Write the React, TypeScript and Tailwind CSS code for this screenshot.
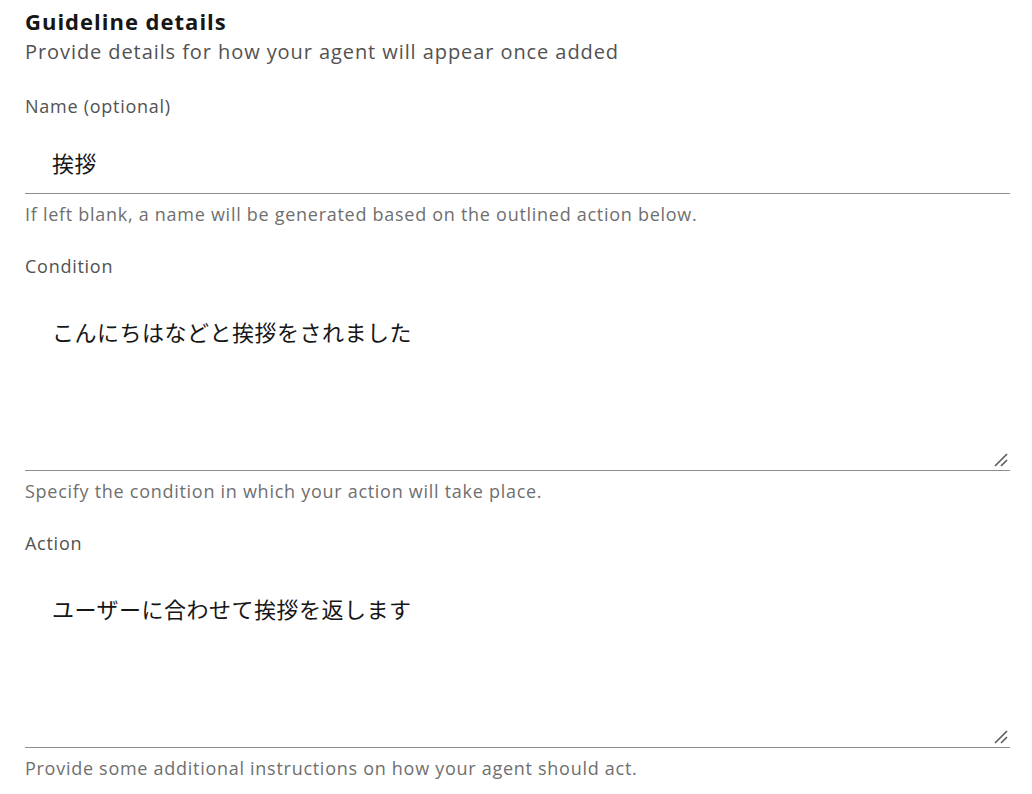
const font = {
  fontFamily: '"Open Sans", "Noto Sans CJK JP", sans-serif',
};

function ResizeHandle() {
  return (
    <svg
      className="pointer-events-none absolute bottom-[3px] right-[2px]"
      width="14"
      height="14"
      viewBox="0 0 14 14"
    >
      <path d="M1 13 L13 1 M7 13 L13 7" stroke="#5a5a5a" strokeWidth="1.6" />
    </svg>
  );
}

function Field({
  label,
  value,
  helper,
  multiline,
}: {
  label: string;
  value: string;
  helper: string;
  multiline?: boolean;
}) {
  return (
    <div className="flex flex-col">
      <label className="text-[18px] leading-[22px] tracking-[0.73px] text-[#525252]">{label}</label>
      <div
        className={
          "relative mt-[17px] border-b border-[#8d8d8d] pl-[27px] text-[22px] leading-[26px] tracking-[0.5px] text-[#161616] " +
          (multiline ? "h-[177px] pt-[25px]" : "h-[60px] pt-[16px]")
        }
      >
        {value}
        {multiline && <ResizeHandle />}
      </div>
      <p className="mt-[9px] text-[18px] leading-[22px] tracking-[0.72px] text-[#6f6f6f]">{helper}</p>
    </div>
  );
}

export default function App() {
  return (
    <div className="min-h-screen bg-white pl-[25px] pr-[22px] pt-[7px]" style={font}>
      <h1 className="text-[22px] font-bold leading-[28px] tracking-[1px] text-[#161616]">
        Guideline details
      </h1>
      <p className="mt-[4px] text-[20px] leading-[26px] tracking-[0.92px] text-[#525252]">
        Provide details for how your agent will appear once added
      </p>
      <div className="mt-[30px] flex flex-col gap-[30px]">
        <Field
          label="Name (optional)"
          value="挨拶"
          helper="If left blank, a name will be generated based on the outlined action below."
        />
        <Field
          label="Condition"
          value="こんにちはなどと挨拶をされました"
          helper="Specify the condition in which your action will take place."
          multiline
        />
        <Field
          label="Action"
          value="ユーザーに合わせて挨拶を返します"
          helper="Provide some additional instructions on how your agent should act."
          multiline
        />
      </div>
    </div>
  );
}
